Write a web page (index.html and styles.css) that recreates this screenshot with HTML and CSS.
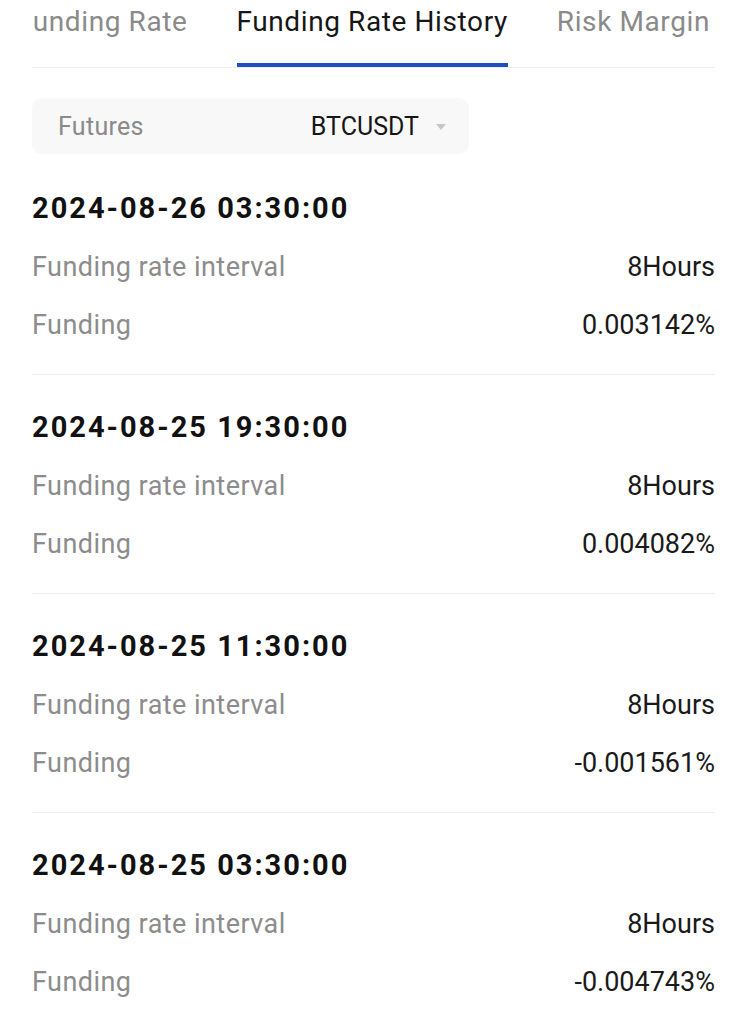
FILE: index.html
```html
<!DOCTYPE html>
<html>
<head>
<meta charset="utf-8">
<link rel="stylesheet" href="styles.css">
</head>
<body>
<div class="page">
  <div class="tabs">
    <div class="tab-track">
      <div class="tab">Funding Rate</div>
      <div class="tab active">Funding Rate History</div>
      <div class="tab">Risk Margin</div>
    </div>
  </div>

  <div class="select">
    <span class="select-label">Futures</span>
    <span class="select-value">BTCUSDT <span class="caret"></span></span>
  </div>

  <div class="list">
    <div class="item">
      <div class="date">2024-08-26 03:30:00</div>
      <div class="row"><span class="k">Funding rate interval</span><span class="v">8Hours</span></div>
      <div class="row"><span class="k">Funding</span><span class="v">0.003142%</span></div>
    </div>
    <div class="item">
      <div class="date">2024-08-25 19:30:00</div>
      <div class="row"><span class="k">Funding rate interval</span><span class="v">8Hours</span></div>
      <div class="row"><span class="k">Funding</span><span class="v">0.004082%</span></div>
    </div>
    <div class="item">
      <div class="date">2024-08-25 11:30:00</div>
      <div class="row"><span class="k">Funding rate interval</span><span class="v">8Hours</span></div>
      <div class="row"><span class="k">Funding</span><span class="v">-0.001561%</span></div>
    </div>
    <div class="item">
      <div class="date">2024-08-25 03:30:00</div>
      <div class="row"><span class="k">Funding rate interval</span><span class="v">8Hours</span></div>
      <div class="row"><span class="k">Funding</span><span class="v">-0.004743%</span></div>
    </div>
  </div>
</div>
</body>
</html>
```

FILE: styles.css
```css
* { box-sizing: border-box; }
html, body { margin: 0; padding: 0; background: #ffffff; }
body {
  font-family: Roboto, "Noto Sans", "Liberation Sans", sans-serif;
  color: #161616;
  width: 747px;
  height: 1024px;
  overflow: hidden;
}
.page { padding: 0 32px; }

.tabs {
  overflow: hidden;
  border-bottom: 1px solid #f0f0f0;
}
.tab-track {
  display: flex;
  gap: 49px;
  margin-left: -15px;
}
.tab {
  flex: none;
  font-size: 28px;
  letter-spacing: 0.6px;
  line-height: 44px;
  padding-bottom: 19px;
  color: #8a8a8a;
  white-space: nowrap;
  border-bottom: 4px solid transparent;
}
.tab.active {
  color: #161616;
  border-bottom-color: #1d4fbd;
}

.select {
  margin-top: 30px;
  width: 437px;
  height: 56px;
  background: #f8f8f8;
  border-radius: 10px;
  display: flex;
  align-items: center;
  justify-content: space-between;
  padding: 0 23px 0 26px;
}
.select-label { font-size: 25px; color: #8a8a8a; letter-spacing: 0.3px; }
.select-value { font-size: 25px; color: #161616; display: flex; align-items: center; gap: 17px; }
.caret {
  width: 0; height: 0;
  border-left: 5px solid transparent;
  border-right: 5px solid transparent;
  border-top: 6px solid #c6c6c6;
  margin-top: 2px;
}

.list { margin-top: 2px; }
.item {
  border-bottom: 1px solid #eeeeee;
  padding: 32.5px 0 20px;
}
.item:last-child { border-bottom: none; }
.date {
  font-size: 29px;
  font-weight: 700;
  letter-spacing: 2px;
  line-height: 38px;
  color: #111111;
  margin-bottom: 11.5px;
}
.row {
  display: flex;
  justify-content: space-between;
  align-items: center;
  height: 58px;
  font-size: 27px;
}
.k { color: #8c8c8c; letter-spacing: 0.45px; }
.v { color: #1a1a1a; }
```
